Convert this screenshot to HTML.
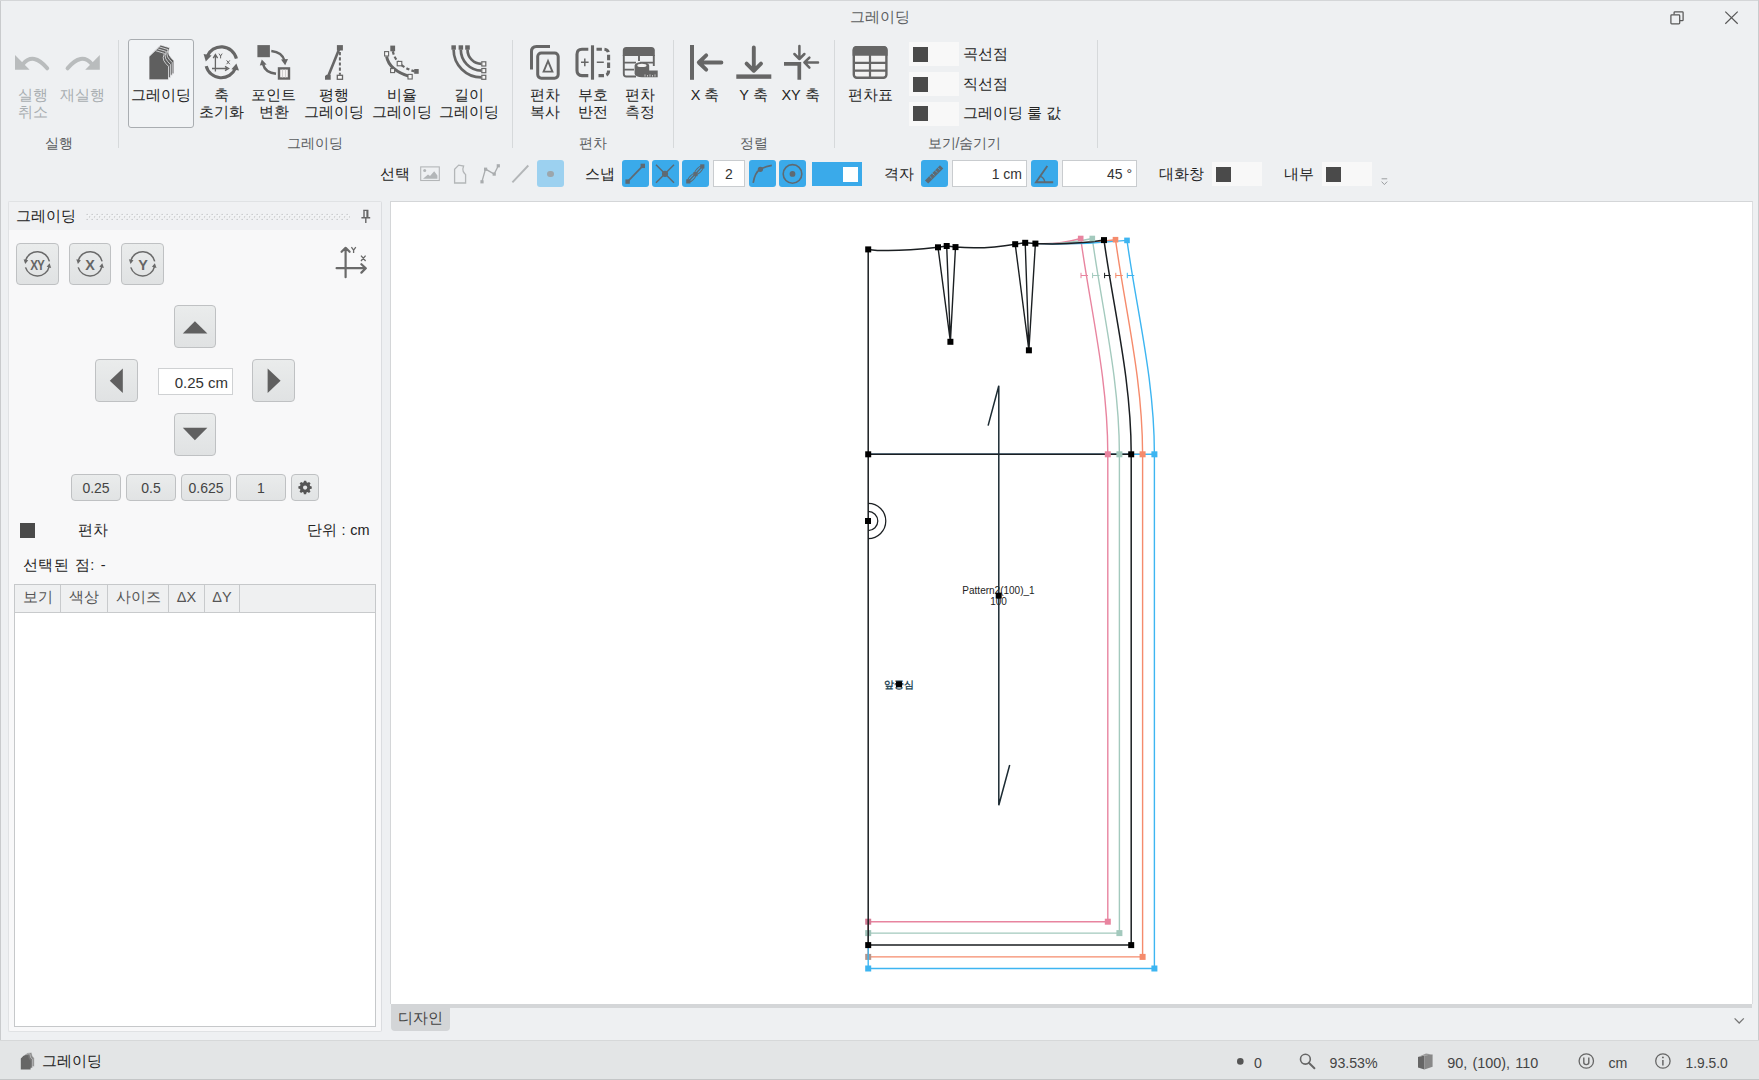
<!DOCTYPE html>
<html lang="ko">
<head>
<meta charset="utf-8">
<title>그레이딩</title>
<style>
html,body{margin:0;padding:0}
body{width:1759px;height:1080px;position:relative;overflow:hidden;background:#eef0f2;font-family:"Liberation Sans",sans-serif;font-size:14.5px;color:#242424;line-height:17px}
.a{position:absolute}
.c{position:absolute;transform:translateX(-50%);white-space:nowrap;text-align:center}
.t{position:absolute;white-space:nowrap}
.sep{position:absolute;top:40px;width:1px;height:108px;background:#d6d9db}
.grp{position:absolute;top:135px;transform:translateX(-50%);white-space:nowrap;color:#5a5d60;font-size:14px}
.dis{color:#a9aeb1}
svg{position:absolute;overflow:visible}
.sw{position:absolute;width:50px;height:24px;background:#f8f8f8}
.sw i{position:absolute;left:4px;top:4.5px;width:15px;height:15px;background:#4a4a4a}
.bb{position:absolute;top:160.2px;width:27px;height:27.2px;background:#3aaaea;border-radius:3px}
.inp{position:absolute;top:160.2px;height:25.2px;background:#fff;border:1px solid #c9cccf;text-align:right;line-height:27px;font-size:14px;color:#333}
.pbtn{position:absolute;background:linear-gradient(#eaecec,#e0e2e3);border:1px solid #bfc1c3;border-radius:4px;box-sizing:border-box}
.nbtn{position:absolute;top:474px;height:27px;background:linear-gradient(#eaecec,#e1e3e4);border:1px solid #bfc1c3;border-radius:4px;box-sizing:border-box;text-align:center;line-height:26px;font-size:14px;color:#444}
.th{position:absolute;top:0;height:26.5px;border-right:1px solid #c8cacc;text-align:center;line-height:25.6px;color:#555;font-size:14.5px;box-sizing:border-box}
</style>
</head>
<body>
<!-- window edge -->
<div class="a" style="left:0;top:0;width:1px;height:1080px;background:#c9cbcd"></div>
<div class="a" style="left:0;top:0;width:1759px;height:1px;background:#d4d6d8"></div>

<div class="a" style="left:1758px;top:0;width:1px;height:1080px;background:#c9cbcd"></div>
<!-- title -->
<div class="c" style="left:880px;top:9px;color:#5b5e61">그레이딩</div>
<svg id="winctl" style="left:1660px;top:5px" width="90" height="24" viewBox="0 0 90 24" fill="none" stroke="#585858" stroke-width="1.25">
<rect x="10.9" y="9.9" width="8.8" height="8.9" rx="0.8"/><path d="M14.1 9.6V7.6Q14.1 6.8 14.9 6.8H22.3Q23.1 6.8 23.1 7.6V14.9Q23.1 15.7 22.3 15.7H20"/>
<path d="M65.3 6.6L77.7 18.7M77.7 6.6L65.3 18.7" stroke-width="1.2"/>
</svg>

<!-- ribbon separators -->
<div class="sep" style="left:118px"></div>
<div class="sep" style="left:512px"></div>
<div class="sep" style="left:673px"></div>
<div class="sep" style="left:834px"></div>
<div class="sep" style="left:1097px"></div>

<!-- ribbon group 1 -->
<div class="c dis" style="left:32.5px;top:87px">실행<br>취소</div>
<div class="c dis" style="left:82.5px;top:87px">재실행</div>
<div class="grp" style="left:59px">실행</div>

<!-- ribbon group 2 -->
<div class="a" style="left:128px;top:39px;width:66px;height:89px;border:1px solid #a9adb1;border-radius:3px;box-sizing:border-box;background:#f1f3f5"></div>
<div class="c" style="left:161px;top:87px">그레이딩</div>
<div class="c" style="left:221.5px;top:87px">축<br>초기화</div>
<div class="c" style="left:273.5px;top:87px">포인트<br>변환</div>
<div class="c" style="left:334px;top:87px">평행<br>그레이딩</div>
<div class="c" style="left:401.5px;top:87px">비율<br>그레이딩</div>
<div class="c" style="left:468.5px;top:87px">길이<br>그레이딩</div>
<div class="grp" style="left:315px">그레이딩</div>

<!-- ribbon group 3 -->
<div class="c" style="left:545px;top:87px">편차<br>복사</div>
<div class="c" style="left:592.5px;top:87px">부호<br>반전</div>
<div class="c" style="left:640px;top:87px">편차<br>측정</div>
<div class="grp" style="left:592.5px">편차</div>

<!-- ribbon group 4 -->
<div class="c" style="left:705px;top:87px">X 축</div>
<div class="c" style="left:753.5px;top:87px">Y 축</div>
<div class="c" style="left:800.5px;top:87px">XY 축</div>
<div class="grp" style="left:753.5px">정렬</div>

<!-- ribbon group 5 -->
<div class="c" style="left:870.5px;top:87px">편차표</div>
<div class="sw" style="left:909px;top:42px"><i></i></div>
<div class="sw" style="left:909px;top:72px"><i></i></div>
<div class="sw" style="left:909px;top:101.5px"><i></i></div>
<div class="t" style="left:963px;top:45.5px">곡선점</div>
<div class="t" style="left:963px;top:75.5px">직선점</div>
<div class="t" style="left:963px;top:105px">그레이딩 룰 값</div>
<div class="grp" style="left:964.5px">보기/숨기기</div>

<svg id="rib" style="left:0;top:0" width="1759" height="200" viewBox="0 0 1759 200" fill="none" stroke="#666" stroke-linecap="butt">
<!-- undo / redo -->
<g id="undo" fill="#b9bcbd" stroke="#b9bcbd"><path d="M15 55.1V69.7H29.6Z" stroke="none"/><path d="M23 64Q33.5 51.8 47.2 68.3" fill="none" stroke-width="4" stroke-linecap="round"/></g>
<g fill="#b9bcbd" stroke="#b9bcbd"><path d="M99.8 55.1V69.7H85.2Z" stroke="none"/><path d="M91.8 64Q81.3 51.8 67.6 68.3" fill="none" stroke-width="4" stroke-linecap="round"/></g>
<!-- grading (stack of pieces) -->
<g fill="#5f5f5f" stroke="#f1f3f5" stroke-width="0.75" stroke-linejoin="round">
<path transform="translate(5.4,-5.6)" d="M149 79.4V56.6L155.3 50.6L164.4 53.4Q162.3 58.2 163.8 60.6Q165.3 63.3 168.5 66.3V79.4Z"/>
<path transform="translate(3.7,-3.8)" d="M149 79V56.6L155.3 50.6L164.4 53.4Q162.3 58.2 163.8 60.6Q165.3 63.3 168.5 66.3V79Z"/>
<path transform="translate(1.9,-1.9)" d="M149 79.6V56.6L155.3 50.6L164.4 53.4Q162.3 58.2 163.8 60.6Q165.3 63.3 168.5 66.3V79.6Z"/>
<path d="M149 79.8V56.6L155.3 50.6L164.4 53.4Q162.3 58.2 163.8 60.6Q165.3 63.3 168.5 66.3V79.8Z"/>
</g>
<!-- axis reset -->
<g stroke-width="3.1">
<path d="M236.4 58.6A15.5 15.5 0 0 0 207 56.5"/>
<path d="M206.2 66.1A15.5 15.5 0 0 0 235.6 68"/>
</g>
<path d="M203.6 54L211.6 55.6L205.8 61.6Z" fill="#666" stroke="none"/>
<path d="M239 70.6L231.4 69.2L236.4 63.4Z" fill="#666" stroke="none"/>
<g stroke-width="1.3"><path d="M215.4 71.5V56M213.2 58.2L215.4 54.6L217.6 58.2M212 68.5H227M225 66.4L228.6 68.5L225 70.6"/>
<path d="M219 53.6L220.6 56L222.2 53.6M220.6 56V58.4M226.6 60.4L229.8 64.2M229.8 60.4L226.6 64.2" stroke-width="1"/></g>
<!-- point transform -->
<rect x="257.4" y="45.1" width="12.5" height="12.1" fill="#666" stroke="none"/>
<rect x="279" y="68.4" width="10" height="10.1" fill="#f4f4f4" stroke-width="2.4"/>
<path d="M282.5 69.5V77.5M285.5 69.5V77.5" stroke="#c8c8c8" stroke-width="0.8"/>
<g stroke-width="2.5"><path d="M271.3 50.9Q282.5 52 284.6 61"/><path d="M276 73.8Q265 72.5 263.2 64.5"/></g>
<path d="M281 59.6L288 59L285.2 65.2Z" fill="#666" stroke="none"/>
<path d="M259.8 65.6L266.6 64.6L261.8 59.4Z" fill="#666" stroke="none"/>
<!-- parallel -->
<rect x="336.9" y="45.1" width="6" height="5.4" fill="#666" stroke="none"/>
<path d="M325 79.7V76L326.6 74.7H330.7V79.7Z" fill="#666" stroke="none"/>
<path d="M327.9 77L339.7 47.8" stroke-width="2.6"/>
<path d="M339.9 52V74.7" stroke-width="2" stroke-dasharray="3.2 2"/>
<rect x="337.3" y="75.3" width="5.2" height="4" fill="#f8f8f8" stroke-width="1.3"/>
<!-- ratio -->
<path d="M386.6 56.4Q389 70 410 76.6" stroke-width="3"/>
<path d="M392.8 51.3Q396 66 414.6 71.4" stroke-width="2.2" stroke-dasharray="3.4 2.2"/>
<rect x="390.3" y="45.6" width="4.8" height="5.7" fill="#666" stroke="none"/>
<rect x="414.2" y="69" width="4.5" height="4.8" fill="#666" stroke="none"/>
<g fill="#f6f6f6" stroke-width="1.1"><rect x="384.6" y="51.6" width="4" height="4.4"/><rect x="390.6" y="68.6" width="4" height="4"/><rect x="408" y="74.4" width="4.2" height="4.6"/><rect x="397.2" y="61.4" width="4.6" height="4.4"/></g>
<!-- length -->
<g stroke-width="2.7"><path d="M453.6 49.5A27.8 27.9 0 0 0 481.4 77.4"/><path d="M460.8 49.5A20.6 21.1 0 0 0 481.4 70.6"/><path d="M467.5 49.5A13.9 14.4 0 0 0 481.4 63.9"/></g>
<g fill="#666" stroke="none"><rect x="451.4" y="45.3" width="4.5" height="4.4"/><rect x="458.6" y="45.3" width="4.5" height="4.4"/><rect x="465.2" y="45.3" width="4.6" height="4.4"/></g>
<g fill="#f6f6f6" stroke-width="1.2"><rect x="481.8" y="61.8" width="4" height="4.2"/><rect x="481.8" y="68.5" width="4" height="4.2"/><rect x="481.8" y="75.3" width="4" height="4"/></g>
<!-- copy -->
<g stroke-width="3"><path d="M550 46.4H536.5Q531.5 46.4 531.5 51.4V69.6"/><rect x="537.7" y="53" width="20.5" height="25.2" rx="3.6"/></g>
<path d="M548 61L543.6 71.6H552.4Z" stroke-width="1.9" stroke-linejoin="miter"/>
<!-- flip -->
<g stroke-width="3.1"><path d="M588.3 49.2H582Q577 49.2 577 54.2V70.6Q577 75.6 582 75.6H588.3"/><path d="M592.5 45.3V79.7"/>
<path d="M596.5 49.2H603.6Q608.6 49.2 608.6 54.2V70.6Q608.6 75.6 603.6 75.6H596.5" stroke-dasharray="5.4 2.4"/></g>
<path d="M581 62.3H588.6M584.8 58.4V66.2M596.8 62.3H603.8" stroke-width="1.5"/>
<!-- measure -->
<path d="M626.3 47H651.3Q654.8 47 654.8 50.5V56H622.8V50.5Q622.8 47 626.3 47Z" fill="#666" stroke="none"/>
<g stroke-width="1.9"><path d="M623.8 55V74Q623.8 76.5 626.3 76.5H636M623.8 62.6H636M623.8 69.6H634M639 56V61M640 62.6H653.8M653.8 55V66"/></g>
<path d="M634.6 65.4A7.3 3.5 0 0 1 649.2 65.4V70.4H657.7V77.2H642A7.3 3.5 0 0 1 634.6 73.7Z" fill="#666" stroke="none"/>
<ellipse cx="641.9" cy="65.4" rx="4.6" ry="1.7" fill="#f2f2f2" stroke="none"/>
<path d="M645 74.4V76.6M647.5 75V76.6M650 74.4V76.6M652.5 75V76.6M655 74.4V76.6" stroke="#ddd" stroke-width="0.8"/>
<!-- X axis -->
<rect x="690" y="45" width="4" height="34.8" fill="#666" stroke="none"/>
<path d="M721.4 62.5H699.5M706.2 55.4L698.8 62.5L706.2 69.6" stroke-width="3.9" stroke-linecap="round" stroke-linejoin="round"/>
<!-- Y axis -->
<rect x="736.3" y="74.4" width="35" height="4.4" fill="#666" stroke="none"/>
<path d="M753.8 47.4V69.6M746.6 63.6L753.8 70.8L761 63.6" stroke-width="3.9" stroke-linecap="round" stroke-linejoin="round"/>
<!-- XY axis -->
<path d="M784 63.8H801.2M799.3 62V79.8" stroke-width="3.7"/>
<path d="M799.4 46V58M794.4 54L799.4 59L804.4 54M818 62.5H805.4M809.4 57.6L804.4 62.5L809.4 67.6" stroke-width="2.5" stroke-linecap="round" stroke-linejoin="round"/>
<!-- table -->
<rect x="853.8" y="47.2" width="32.6" height="30.6" rx="3" fill="#f2f2f2" stroke-width="2.4"/>
<path d="M856.8 46H883.4Q887.6 46 887.6 50.2V55.8H852.6V50.2Q852.6 46 856.8 46Z" fill="#666" stroke="none"/>
<path d="M853 62.9H887M853 70.6H887M870 55V78" stroke-width="2.2"/>
</svg>


<!-- toolbar row 2 -->
<div class="t" style="left:380px;top:165.5px">선택</div>
<div class="a" style="left:536.5px;top:160.2px;width:27.2px;height:27.2px;background:#9cd1f0;border-radius:3px"></div>
<div class="a" style="left:546.7px;top:170.6px;width:6.9px;height:6.9px;border-radius:50%;background:#9ca6ac"></div>
<div class="t" style="left:584.5px;top:165.5px">스냅</div>
<div class="bb" style="left:621.5px"></div>
<div class="bb" style="left:651.5px"></div>
<div class="bb" style="left:681.5px"></div>
<div class="inp" style="left:713px;width:30px;text-align:center">2</div>
<div class="bb" style="left:749px"></div>
<div class="bb" style="left:779px"></div>
<div class="a" style="left:811.5px;top:162px;width:50px;height:23.5px;background:#3aaaea"></div>
<div class="a" style="left:842.5px;top:166.5px;width:15.5px;height:15px;background:#fff"></div>
<div class="t" style="left:884px;top:165.5px">격자</div>
<div class="bb" style="left:920.5px"></div>
<div class="inp" style="left:951.5px;width:69.5px;padding-right:3.5px">1 cm</div>
<div class="bb" style="left:1030.5px"></div>
<div class="inp" style="left:1061.5px;width:69.5px;padding-right:3.5px">45 °</div>
<div class="t" style="left:1158.5px;top:165.5px">대화창</div>
<div class="sw" style="left:1211.5px;top:162px"><i></i></div>
<div class="t" style="left:1283.5px;top:165.5px">내부</div>
<div class="sw" style="left:1322px;top:162px"><i></i></div>

<svg id="tb2" style="left:0;top:150px" width="1759" height="50" viewBox="0 150 1759 50" fill="none" stroke="#5f6a72" stroke-linecap="butt">
<!-- select icons -->
<g stroke="#b3b6b8">
<rect x="420.7" y="166.9" width="18.6" height="13.6" stroke-width="1.1"/>
<path d="M423 178.7L428 174.6L430 176L434.2 171.2L437.4 175.6V178.7Z" fill="#b3b6b8" stroke="none"/>
<circle cx="424.7" cy="170.6" r="1.5" fill="#b3b6b8" stroke="none"/>
<path d="M454.6 183V169.3L458.7 165.1L463.6 166Q462.2 169.6 463.2 171.4Q464 173 465.6 174.6V183Z" stroke-width="1.3"/>
<path d="M481.9 181.8L485.5 169.1L494.2 174.1L498.3 165.7" stroke-width="1.3" stroke="#a9acae"/>
<g fill="#a9acae" stroke="none"><rect x="480.4" y="180.2" width="3.2" height="3.2"/><rect x="484" y="167.6" width="3.2" height="3.2"/><rect x="492.6" y="172.5" width="3.2" height="3.2"/><rect x="496.7" y="164.2" width="3.2" height="3.2"/></g>
<path d="M512.4 182.3L528.3 165.5" stroke-width="1.9"/>
</g>
<!-- snap 1 -->
<path d="M627.6 181.6L642.8 165.9" stroke-width="1.7"/><rect x="625.4" y="179.4" width="4.4" height="4.4" fill="#5f6a72" stroke="none"/><rect x="640.6" y="163.7" width="4.4" height="4.4" fill="#5f6a72" stroke="none"/>
<!-- snap 2 -->
<path d="M656 164.8L674 182.8M674 164.8L656 182.8" stroke-width="1.5"/><circle cx="665" cy="173.8" r="3.1" fill="#5f6a72" stroke="none"/>
<!-- snap 3 -->
<path d="M688.3 181.4L702.3 166.4" stroke-width="1.4"/>
<ellipse cx="691.9" cy="177.7" rx="5.2" ry="2.3" transform="rotate(-46 691.9 177.7)" stroke-width="1"/>
<ellipse cx="698.9" cy="170.2" rx="5.2" ry="2.3" transform="rotate(-46 698.9 170.2)" stroke-width="1"/>
<g fill="#5f6a72" stroke="none"><rect x="686.2" y="179.3" width="4.2" height="4.2"/><rect x="693.4" y="172" width="4.2" height="4.2"/><rect x="700.2" y="164.3" width="4.2" height="4.2"/></g>
<!-- snap 4 -->
<path d="M753.2 182.8Q755 172 760.5 169.2Q765 166.6 771.8 165.3" stroke-width="1.7"/><circle cx="760.4" cy="169.3" r="2.6" fill="#5f6a72" stroke="none"/>
<!-- snap 5 -->
<circle cx="792.5" cy="173.9" r="9.3" stroke-width="1.6"/><circle cx="792.5" cy="173.9" r="2.9" fill="#5f6a72" stroke="none"/>
<!-- ruler -->
<path d="M926.6 182L941.6 166.8" stroke-width="4.6"/>
<path d="M929.4 176L931.6 178.2M932.2 173.2L934.4 175.4M935 170.4L937.2 172.6M937.8 167.6L940 169.8" stroke="#3aaaea" stroke-width="0.9"/>
<!-- angle -->
<path d="M1047.3 166L1036 182.3H1053.2" stroke-width="1.9" stroke-linejoin="miter"/><path d="M1040.4 176.4Q1044.4 178 1044.8 182.3" stroke-width="1.4"/>
<!-- overflow chevron -->
<path d="M1381.6 178.8H1387.2" stroke="#9a9da0" stroke-width="1"/><path d="M1381.6 181.6L1384.4 184.6L1387.2 181.6" stroke="#9a9da0" stroke-width="1"/>
</svg>


<!-- left panel -->
<div class="a" id="lp" style="left:8px;top:201px;width:374px;height:831px;background:#f8f8f9;border:1px solid #e0e2e4;border-right:1.6px solid #dbdde0;border-radius:2px;box-sizing:border-box">
 <div class="a" style="left:0;top:0;width:372px;height:28px;background:#f0f1f3"></div>
</div>
<div class="t" style="left:15.8px;top:208px;color:#222">그레이딩</div>
<svg style="left:86px;top:213px" width="264" height="8" viewBox="0 0 264 8"><defs><pattern id="gp" width="5" height="5" patternUnits="userSpaceOnUse"><rect x="0.6" y="0.9" width="1.1" height="1.1" fill="#b9bbbd"/><rect x="1.7" y="1.9" width="1" height="1" fill="#fbfbfb"/><rect x="3.1" y="3.4" width="1.1" height="1.1" fill="#b9bbbd"/><rect x="4.2" y="4.4" width="0.8" height="0.8" fill="#fbfbfb"/></pattern></defs><rect x="0" y="0" width="264" height="7" fill="url(#gp)"/></svg>


<div class="pbtn" style="left:16px;top:243px;width:43px;height:42px"></div>
<div class="pbtn" style="left:69px;top:243px;width:42px;height:42px"></div>
<div class="pbtn" style="left:121px;top:243px;width:43px;height:42px"></div>
<div class="pbtn" style="left:174px;top:305px;width:42px;height:43px"></div>
<div class="pbtn" style="left:95px;top:359px;width:43px;height:43px"></div>
<div class="pbtn" style="left:252px;top:359px;width:43px;height:43px"></div>
<div class="pbtn" style="left:174px;top:413px;width:42px;height:43px"></div>
<div class="a" style="left:157.5px;top:367.5px;width:73px;height:25px;background:#fff;border:1px solid #cfd1d3;text-align:right;line-height:27px;font-size:15px;color:#333;padding-right:3.5px;box-sizing:content-box;width:69.5px">0.25 cm</div>

<div class="nbtn" style="left:71px;width:50px">0.25</div>
<div class="nbtn" style="left:126px;width:50px">0.5</div>
<div class="nbtn" style="left:181px;width:50px">0.625</div>
<div class="nbtn" style="left:236px;width:50px">1</div>
<div class="nbtn" style="left:291px;width:28px"></div>

<div class="a" style="left:20px;top:522.5px;width:15px;height:15px;background:#4a4a4a"></div>
<div class="t" style="left:78.2px;top:522px">편차</div>
<div class="t" style="right:1389.3px;top:522px;word-spacing:0.8px">단위 : cm</div>
<div class="t" style="left:23px;top:556.6px;word-spacing:2px;letter-spacing:0.25px">선택된 점: -</div>

<div class="a" style="left:14px;top:584px;width:362px;height:442.5px;background:#fff;border:1px solid #c6c8ca;box-sizing:border-box">
 <div class="a" style="left:0;top:0;width:360px;height:26.5px;background:#eff0f1;border-bottom:1px solid #c8cacc"></div>
 <div class="th" style="left:0;width:46px">보기</div>
 <div class="th" style="left:46px;width:47px">색상</div>
 <div class="th" style="left:93px;width:61px">사이즈</div>
 <div class="th" style="left:154px;width:36px">ΔX</div>
 <div class="th" style="left:190px;width:35px">ΔY</div>
</div>

<svg id="lpi" style="left:0;top:200px" width="400" height="320" viewBox="0 200 400 320" fill="none" stroke="#6a6a6a" stroke-linecap="butt">
<!-- pin -->
<path d="M363.2 210.4H368.4M364 210.4V217.4M367.6 210.4V217.4M361.4 217.8H370.2M365.8 218V223" stroke="#666" stroke-width="1.4"/>
<rect x="366.4" y="210.4" width="1.8" height="7" fill="#666" stroke="none"/>
<!-- rotate icons -->
<g id="rot1"><path d="M49.4 261.4A12.3 12.3 0 0 0 25.6 260.4M25.5 267.4A12.3 12.3 0 0 0 49.2 266.6" stroke-width="1.5"/>
<path d="M23.6 259.2L28.2 260.2L25.2 264Z" fill="#6a6a6a" stroke="none"/><path d="M51.2 268L46.6 266.8L49.6 263.2Z" fill="#6a6a6a" stroke="none"/></g>
<use href="#rot1" x="52.7"/><use href="#rot1" x="105.3"/>
<!-- axis icon -->
<g stroke-width="2.2" stroke-linecap="round" stroke-linejoin="round"><path d="M345.6 277.2V248.4M341.6 251.8L345.6 247.8L349.6 251.8M336.6 268.2H365.4M361.4 264.2L365.8 268.2L361.4 272.6"/></g>
<g stroke-width="1.3"><path d="M351.4 247.2L353.6 250.2L355.8 247.2M353.6 250.2V253M361 255.6L365.6 261M365.6 255.6L361 261"/></g>
<!-- direction triangles -->
<g fill="#606060" stroke="none"><path d="M194.9 321.2L182.8 333.6H207.4Z"/><path d="M194.9 440.2L182.8 427.8H207.4Z"/><path d="M109.8 380.8L122.8 368.6V393Z"/><path d="M280.6 380.8L267.6 368.6V393Z"/></g>
<!-- gear -->
<g transform="translate(305.1 487.6)" fill="#555" stroke="none"><path d="M-1.3 -6.6H1.3L1.7 -4.7L3 -4.1L4.6 -5.2L6.4 -3.4L5.3 -1.8L5.8 -0.5L7.7 0V2.6L5.8 3L5.2 4.3L6.3 5.9L4.5 7.7L2.9 6.6L1.6 7.1L1.2 9H-1.4L-1.8 7.1L-3.1 6.5L-4.7 7.6L-6.5 5.8L-5.4 4.2L-5.9 2.9L-7.8 2.5V-0.1L-5.9 -0.5L-5.3 -1.8L-6.4 -3.4L-4.6 -5.2L-3 -4.1L-1.7 -4.7Z" transform="translate(0 -1.2) scale(0.86)"/><circle cx="0" cy="0" r="2.1" fill="#e5e6e7"/></g>
</svg>
<div class="c" style="left:37.4px;top:256px;font-size:15px;font-weight:bold;color:#666;letter-spacing:-1.2px;transform:translateX(-50%) scaleX(0.78)">XY</div>
<div class="c" style="left:90px;top:256px;font-size:15px;font-weight:bold;color:#666;transform:translateX(-50%) scaleX(0.96)">X</div>
<div class="c" style="left:142.7px;top:256px;font-size:15px;font-weight:bold;color:#666;transform:translateX(-50%) scaleX(0.96)">Y</div>


<!-- canvas -->
<div class="a" id="cv" style="left:390px;top:201px;width:1362.5px;height:803px;background:#fff;border:1px solid #d4d6d8;border-right:1.8px solid #dcdee0;border-bottom:none;box-sizing:border-box"></div>

<div class="c" style="left:998.5px;top:585.9px;font-size:10px;line-height:10.9px;color:#222">Pattern2(100)_1<br>100</div>
<div class="c" style="left:898.5px;top:679px;font-size:10px;line-height:12px;font-weight:bold;color:#2c4c5b">앞중심</div>
<svg id="pat" style="left:0;top:0" width="1759" height="1080" viewBox="0 0 1759 1080" fill="none" stroke-width="1.4" stroke-linecap="butt">
<g stroke="#e8849f">
<path d="M1035.4 243.6Q1058.1 244.79999999999998 1080.7 238.5"/>
<path d="M1080.7 238.5C1090.3 308.5 1107.8 378.3 1107.8 454.3V921.7H868.2"/>
<path d="M868.2 454.3H1107.8"/>
<path d="M868.2 945V921.7"/>
<path d="M1081.0 272.8v5.4M1081.0 275.5h7" stroke-width="1"/>
</g>
<rect x="865.2" y="918.7" width="6" height="6" fill="#d47a94" stroke="none"/>
<g stroke="#a3c9bd">
<path d="M1035.4 243.6Q1063.8 244.79999999999998 1092.3 238.5"/>
<path d="M1092.3 238.5C1101.9 308.5 1119.4 378.3 1119.4 454.3V933.1H868.2"/>
<path d="M868.2 454.3H1119.4"/>
<path d="M868.2 945V933.1"/>
<path d="M1092.6 272.8v5.4M1092.6 275.5h7" stroke-width="1"/>
</g>
<rect x="865.2" y="930.1" width="6" height="6" fill="#9fc3b8" stroke="none"/>
<g stroke="#f58b6c">
<path d="M1035.4 243.6Q1075.5 245.1 1115.5 239.7"/>
<path d="M1115.5 239.7C1125.1 309.7 1142.6 378.3 1142.6 454.3V956.9H868.2"/>
<path d="M868.2 454.3H1142.6"/>
<path d="M868.2 945V956.9"/>
<path d="M1115.8 272.8v5.4M1115.8 275.5h7" stroke-width="1"/>
</g>
<rect x="865.2" y="953.9" width="6" height="6" fill="#b4958c" stroke="none"/>
<g stroke="#3db5f1">
<path d="M1035.4 243.6Q1081.2 245.1 1127.0 240.4"/>
<path d="M1127.0 240.4C1136.6 310.4 1154.4 378.3 1154.4 454.3V968.5H868.2"/>
<path d="M868.2 454.3H1154.4"/>
<path d="M868.2 945V968.5"/>
<path d="M1127.3 272.8v5.4M1127.3 275.5h7" stroke-width="1"/>
</g>
<rect x="865.2" y="965.5" width="6" height="6" fill="#3db5f1" stroke="none"/>
<g stroke="#1b1f22" stroke-width="1.5">
<path d="M868.2 249.4Q890 252.6 938 247.3L946.7 246L955.5 247.1Q985 249.5 1015.2 244.2L1025.2 242.8L1035.4 243.6Q1075 245 1104 240.1"/>
<path d="M1104.0 240.1C1113.6 310.1 1131.2 378.3 1131.2 454.3V945.1H868.2V249.4"/>
<path d="M868.2 454.3H1131.2"/>
<path d="M938 247.3L950.4 341.8L946.7 246M955.5 247.1L950.4 341.8M1015.2 244.2L1028.9 350.3L1025.2 242.8M1035.4 243.6L1028.9 350.3" stroke-width="1.4"/>
<path d="M1104.6 272.8v5.4M1104.6 275.5h6" stroke-width="1"/>
<path d="M868.2 511.4A9.6 9.6 0 0 1 868.2 530.6M868.2 503.4A17.6 17.6 0 0 1 868.2 538.6" stroke-width="1.25"/>
</g>
<path d="M988.1 425.6L998.8 385.7V805.3L1009.7 765" stroke="#1c2b33" stroke-width="1.5"/>
<rect x="1077.9" y="235.7" width="5.6" height="5.6" fill="#e8849f" stroke="none"/>
<rect x="1104.8" y="451.3" width="6" height="6" fill="#e8849f" stroke="none"/>
<rect x="1104.8" y="918.7" width="6" height="6" fill="#e8849f" stroke="none"/>
<rect x="1089.5" y="235.7" width="5.6" height="5.6" fill="#a3c9bd" stroke="none"/>
<rect x="1116.4" y="451.3" width="6" height="6" fill="#a3c9bd" stroke="none"/>
<rect x="1116.4" y="930.1" width="6" height="6" fill="#a3c9bd" stroke="none"/>
<rect x="1112.7" y="236.9" width="5.6" height="5.6" fill="#f58b6c" stroke="none"/>
<rect x="1139.6" y="451.3" width="6" height="6" fill="#f58b6c" stroke="none"/>
<rect x="1139.6" y="953.9" width="6" height="6" fill="#f58b6c" stroke="none"/>
<rect x="1124.2" y="237.6" width="5.6" height="5.6" fill="#3db5f1" stroke="none"/>
<rect x="1151.4" y="451.3" width="6" height="6" fill="#3db5f1" stroke="none"/>
<rect x="1151.4" y="965.5" width="6" height="6" fill="#3db5f1" stroke="none"/>
<rect x="865.2" y="246.4" width="6" height="6" fill="#000" stroke="none"/>
<rect x="935.0" y="244.3" width="6" height="6" fill="#000" stroke="none"/>
<rect x="943.7" y="243.0" width="6" height="6" fill="#000" stroke="none"/>
<rect x="952.5" y="244.1" width="6" height="6" fill="#000" stroke="none"/>
<rect x="947.4" y="338.8" width="6" height="6" fill="#000" stroke="none"/>
<rect x="1012.2" y="241.2" width="6" height="6" fill="#000" stroke="none"/>
<rect x="1022.2" y="239.8" width="6" height="6" fill="#000" stroke="none"/>
<rect x="1032.4" y="240.6" width="6" height="6" fill="#000" stroke="none"/>
<rect x="1025.9" y="347.3" width="6" height="6" fill="#000" stroke="none"/>
<rect x="1101.0" y="237.1" width="6" height="6" fill="#000" stroke="none"/>
<rect x="865.2" y="451.3" width="6" height="6" fill="#000" stroke="none"/>
<rect x="1128.2" y="451.3" width="6" height="6" fill="#000" stroke="none"/>
<rect x="865.2" y="942.1" width="6" height="6" fill="#000" stroke="none"/>
<rect x="1128.2" y="942.1" width="6" height="6" fill="#000" stroke="none"/>
<rect x="865.0" y="518.0" width="6" height="6" fill="#000" stroke="none"/>
<rect x="995.7" y="592.6" width="6" height="6" fill="#000" stroke="none"/>
<rect x="896.0" y="681.3" width="6" height="6" fill="#000" stroke="none"/>
</svg>

<!-- design tab -->
<div class="a" style="left:391px;top:1004px;width:1361px;height:4px;background:#d4d6d8"></div>
<div class="a" style="left:391px;top:1004px;width:58.8px;height:27.4px;background:#d3d5d7;border-radius:0 0 4px 4px"></div>
<div class="c" style="left:420px;top:1010px;color:#444">디자인</div>

<!-- status bar -->
<div class="a" style="left:0;top:1040px;width:1759px;height:40px;background:#e3e5e6;border-top:1.5px solid #d6d8d9;box-sizing:border-box"></div>
<div class="a" style="left:0;top:1079px;width:1759px;height:1px;background:#c4c6c7"></div>
<div class="t" style="left:41.5px;top:1053px;color:#222">그레이딩</div>
<div class="t" style="left:1254px;top:1054.7px;color:#444;font-size:14.2px">0</div>
<div class="t" style="left:1329.5px;top:1054.7px;color:#444;font-size:14.2px">93.53%</div>
<div class="t" style="left:1447.3px;top:1054.7px;color:#444;font-size:14.4px;word-spacing:1.2px">90, (100), 110</div>
<div class="t" style="left:1608.5px;top:1054.7px;color:#444;font-size:14.2px">cm</div>
<div class="t" style="left:1685.5px;top:1054.7px;color:#444;font-size:13.8px">1.9.5.0</div>

<svg id="sbi" style="left:0;top:1000px" width="1759" height="80" viewBox="0 1000 1759 80" fill="none" stroke="#666" stroke-linecap="butt">
<!-- status grading icon -->
<g fill="#666" stroke="#e3e5e6" stroke-width="0.5"><path d="M24.4 1066.6V1055.6L27.2 1053L31.6 1052.4L32.4 1056L34.2 1058V1066.6Z" fill="#8a8a8a"/><path d="M22.6 1068V1057L25.4 1054.4L29.8 1053.8L30.6 1057.4L32.4 1059.4V1068Z" fill="#777"/><path d="M20.8 1069.4V1058.4L23.6 1055.8L28 1055.2L28.8 1058.8L30.6 1060.8V1069.4Z" stroke="none"/></g>
<!-- dot -->
<circle cx="1240.3" cy="1061.4" r="3.3" fill="#555" stroke="none"/>
<!-- magnifier -->
<circle cx="1305.4" cy="1059.2" r="4.9" stroke-width="1.6"/><path d="M1308.8 1062.8L1314.4 1068.2" stroke-width="2" stroke-linecap="round"/>
<!-- size stack -->
<g stroke="none"><path d="M1418 1057L1424.4 1055.6V1069.4L1418 1067.6Z" fill="#666"/><path d="M1424.4 1055.6L1432.6 1054.4V1066.8L1424.4 1069.4Z" fill="#888"/><path d="M1418 1057L1426 1053.4L1432.6 1054.4L1424.4 1055.6Z" fill="#999"/></g>
<!-- unit -->
<circle cx="1586.3" cy="1061" r="7.2" stroke-width="1.3"/><path d="M1583.8 1057.4V1062.6Q1583.8 1064.6 1586.3 1064.6Q1588.8 1064.6 1588.8 1062.6V1057.4" stroke-width="1.4"/>
<!-- info -->
<circle cx="1662.9" cy="1061" r="7.2" stroke-width="1.3"/><path d="M1662.9 1060V1065.4" stroke-width="1.5"/><circle cx="1662.9" cy="1057.4" r="0.95" fill="#666" stroke="none"/>
<!-- tab chevron -->
<path d="M1734.6 1018.4L1739.2 1023L1743.8 1018.4" stroke="#777" stroke-width="1.3"/>
</svg>

</body>
</html>
